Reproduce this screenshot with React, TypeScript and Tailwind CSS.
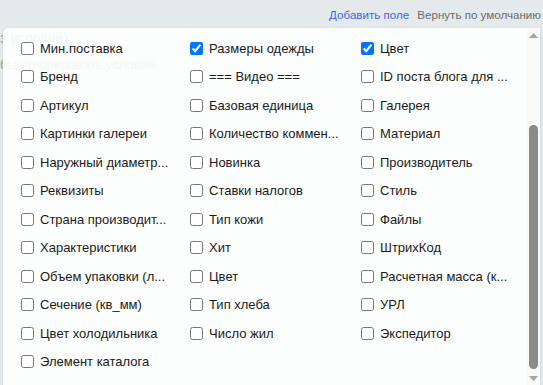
import React from "react";

type Field = { label: string; checked?: boolean };

const fields: Field[] = [
  { label: "Мин.поставка" },
  { label: "Размеры одежды", checked: true },
  { label: "Цвет", checked: true },
  { label: "Бренд" },
  { label: "=== Видео ===" },
  { label: "ID поста блога для ..." },
  { label: "Артикул" },
  { label: "Базовая единица" },
  { label: "Галерея" },
  { label: "Картинки галереи" },
  { label: "Количество коммен..." },
  { label: "Материал" },
  { label: "Наружный диаметр..." },
  { label: "Новинка" },
  { label: "Производитель" },
  { label: "Реквизиты" },
  { label: "Ставки налогов" },
  { label: "Стиль" },
  { label: "Страна производит..." },
  { label: "Тип кожи" },
  { label: "Файлы" },
  { label: "Характеристики" },
  { label: "Хит" },
  { label: "ШтрихКод" },
  { label: "Объем упаковки (л..." },
  { label: "Цвет" },
  { label: "Расчетная масса (к..." },
  { label: "Сечение (кв_мм)" },
  { label: "Тип хлеба" },
  { label: "УРЛ" },
  { label: "Цвет холодильника" },
  { label: "Число жил" },
  { label: "Экспедитор" },
  { label: "Элемент каталога" },
];

function FieldItem({ field }: { field: Field }) {
  return (
    <label className="flex h-[28.5px] items-center gap-[6px] whitespace-nowrap text-[13px] text-[#1b1b1b]">
      <input
        type="checkbox"
        defaultChecked={field.checked}
        className="m-0 h-[13px] w-[13px] shrink-0 accent-[#0075ff]"
      />
      <span>{field.label}</span>
    </label>
  );
}

function Scrollbar() {
  return (
    <div className="flex w-[13px] shrink-0 flex-col items-center bg-[#f9f9f9] pt-[5px]">
      <svg width="9" height="5" viewBox="0 0 9 5">
        <polygon points="0,5 4.5,0 9,5" fill="#a3a3a3" />
      </svg>
      <div className="mt-[87px] h-[244px] w-[9px] rounded-full bg-[#8b8b8b]" />
      <svg width="9" height="5" viewBox="0 0 9 5" className="mt-[7px]">
        <polygon points="0,0 9,0 4.5,5" fill="#a3a3a3" />
      </svg>
    </div>
  );
}

export default function App() {
  return (
    <div
      className="relative h-[385px] w-full overflow-hidden bg-[#e4eaec]"
      style={{ fontFamily: '"Liberation Sans", Arial, sans-serif' }}
    >
      <div className="flex justify-end gap-[8px] pr-[2px] pt-[8px] text-[11.6px] leading-[14px]">
        <a href="#" className="text-[#3d63f0]">Добавить поле</a>
        <a href="#" className="text-[#6b6b6b]">Вернуть по умолчанию</a>
      </div>

      {/* page content showing faintly through the popup */}
      <div className="mt-[8px] text-[14px] leading-[16px] text-[#8aa895]">
        <div>з условий)</div>
        <div className="mt-[11px] text-[13px]">бы игнорировать условие.</div>
      </div>

      <div className="absolute bottom-0 left-[3px] right-[3px] top-[28px] flex rounded-tl-[6px] bg-white/90 shadow-sm">
        <div className="flex-1 pl-[18px] pt-[6px]">
          <div className="grid grid-cols-[169px_171px_1fr]">
            {fields.map((f, i) => (
              <FieldItem key={i} field={f} />
            ))}
          </div>
        </div>
        <Scrollbar />
      </div>
    </div>
  );
}
